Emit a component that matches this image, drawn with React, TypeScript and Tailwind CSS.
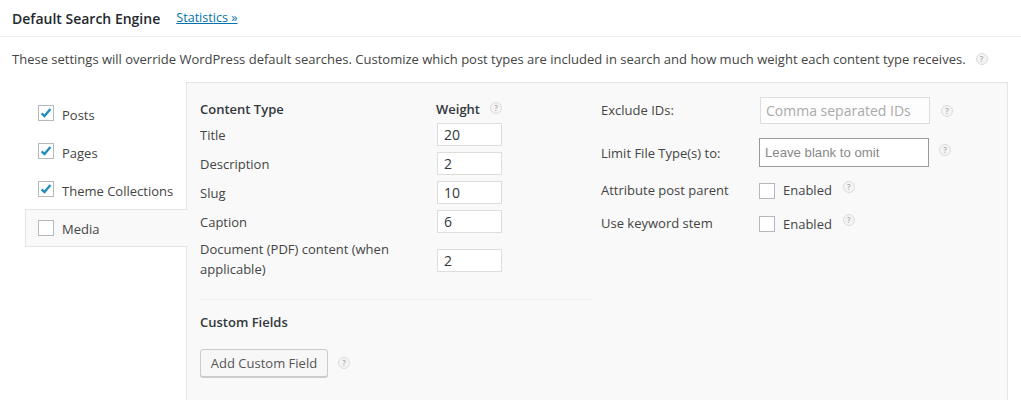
const font = "font-['Open_Sans',sans-serif]"

function Help({ className = '' }: { className?: string }) {
  return (
    <span className={`flex h-[12px] w-[12px] shrink-0 items-center justify-center rounded-full border border-[#dcdcdc] bg-[#f4f4f4] text-[8px] leading-none font-semibold text-[#aaa] ${className}`}>
      ?
    </span>
  )
}

function Check({ checked = false }: { checked?: boolean }) {
  return (
    <span className="flex h-[16px] w-[16px] shrink-0 items-center justify-center border border-[#b4b9be] bg-white">
      {checked && (
        <svg viewBox="0 0 16 16" className="h-[14px] w-[14px]">
          <path d="M3 8.5 L6.3 11.5 L13 3.5" fill="none" stroke="#1e8cbe" strokeWidth="2.6" />
        </svg>
      )}
    </span>
  )
}

const weights = [
  ['Title', '20'],
  ['Description', '2'],
  ['Slug', '10'],
  ['Caption', '6'],
]

function WeightInput({ value }: { value: string }) {
  return (
    <div className="ml-auto mr-[90px] h-[23px] w-[65px] border border-[#ddd] bg-white pl-[6px] text-[14px] leading-[21px] text-[#32373c]">
      {value}
    </div>
  )
}

export default function App() {
  return (
    <div className={`${font} h-[400px] w-[1021px] overflow-hidden bg-white text-[13px] text-[#444]`}>
      <div className="flex h-[37px] items-center border-b border-[#eee] pl-[12px]">
        <h2 className="text-[14px] font-semibold text-[#23282d]">Default Search Engine</h2>
        <a className="ml-[16px] mt-[1px] text-[12.6px] text-[#0073aa] underline">Statistics »</a>
      </div>
      <p className="mt-[13px] flex items-center pl-[12px] text-[13px] leading-[18px] text-[#444]">
        These settings will override WordPress default searches. Customize which post types are included in search and how much weight each content type receives.
        <Help className="ml-[10px]" />
      </p>

      <div className="mt-[14px] ml-[25px] flex">
        <div className="w-[161px] pt-[12px] text-[13px]">
          {['Posts', 'Pages', 'Theme Collections'].map((t) => (
            <div key={t} className="flex h-[38px] items-center gap-[8px] pl-[13px]">
              <Check checked />
              <span className="mt-[6px]">{t}</span>
            </div>
          ))}
          <div className="relative z-10 mt-[1px] flex h-[38px] w-[162px] items-center gap-[8px] border border-r-0 border-[#e5e5e5] bg-[#f9f9f9] pl-[12px]">
            <Check />
            <span className="mt-[4px]">Media</span>
          </div>
        </div>

        <div className="flex h-[330px] w-[822px] border border-[#e5e5e5] bg-[#f9f9f9] pl-[13px]">
          <div className="w-[392px] shrink-0">
            <div className="flex h-[37px] items-end pb-[1px] font-semibold text-[#32373c]">
              <span className="w-[236px]">Content Type</span>
              <span className="flex items-center gap-[10px]">Weight <Help className="-mt-[2px]" /></span>
            </div>
            {weights.map(([label, value]) => (
              <div key={label} className="flex h-[29px] items-center">
                <span className="mt-[3px]">{label}</span>
                <WeightInput value={value} />
              </div>
            ))}
            <div className="flex h-[49px] items-center">
              <span className="-mt-[4px] w-[225px] leading-[20px]">Document (PDF) content (when applicable)</span>
              <WeightInput value="2" />
            </div>
            <div className="mt-[14px] border-t border-[#eee] pt-[13px] font-semibold text-[#32373c]">Custom Fields</div>
            <div className="mt-[16px] flex items-center gap-[10px]">
              <button className="h-[28px] w-[128px] rounded-[3px] border border-[#ccc] bg-[#f7f7f7] pt-[2px] text-[13px] text-[#555] shadow-[0_1px_0_#ccc]">
                Add Custom Field
              </button>
              <Help />
            </div>
          </div>

          <div className="ml-[9px] pt-[14px]">
            <div className="flex h-[27px] items-center">
              <span className="w-[159px]">Exclude IDs:</span>
              <div className="h-[27px] w-[170px] border border-[#ddd] bg-[#fdfdfd] pl-[5px] text-[14px] leading-[25px] text-[#aaa]">Comma separated IDs</div>
              <Help className="ml-[11px]" />
            </div>
            <div className="mt-[14px] flex h-[29px] items-center">
              <span className="mt-[2px] w-[158px]">Limit File Type(s) to:</span>
              <div className="h-[29px] w-[170px] border border-[#999] bg-white pl-[5px] font-['Liberation_Sans',sans-serif] text-[13.2px] leading-[28px] text-[#888]">Leave blank to omit</div>
              <Help className="ml-[10px] -mt-[5px]" />
            </div>
            {['Attribute post parent', 'Use keyword stem'].map((t, i) => (
              <div key={t} className={`flex h-[24px] items-center ${i === 0 ? 'mt-[12px]' : 'mt-[9px]'}`}>
                <span className="w-[158px] -mt-[1px]">{t}</span>
                <Check />
                <span className={i === 0 ? 'ml-[8px]' : 'ml-[8px] mt-[2px]'}>Enabled</span>
                <Help className="ml-[11px] -mt-[8px]" />
              </div>
            ))}
          </div>
        </div>
      </div>
    </div>
  )
}
